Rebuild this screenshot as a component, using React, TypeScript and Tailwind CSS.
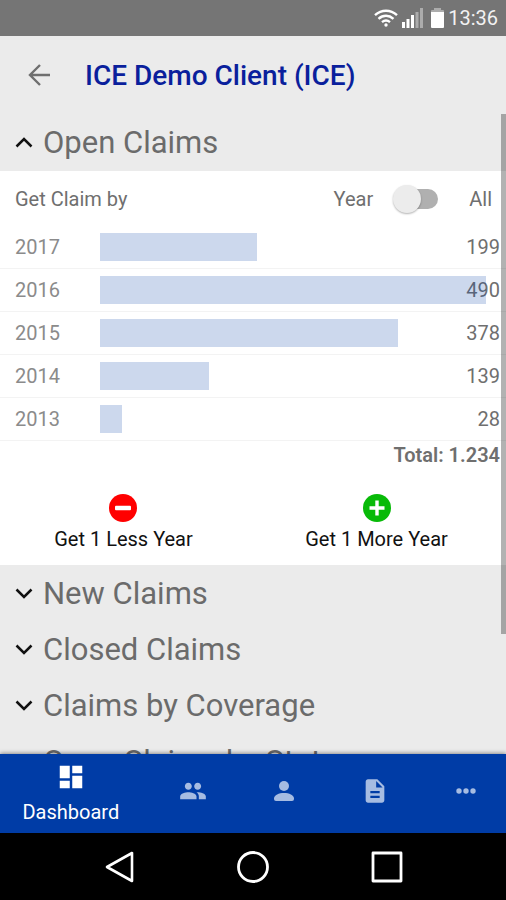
import { useState } from 'react';
import { MdDashboard, MdDescription, MdPeople } from 'react-icons/md';

const claims = [
  { year: 2017, count: 199 },
  { year: 2016, count: 490 },
  { year: 2015, count: 378 },
  { year: 2014, count: 139 },
  { year: 2013, count: 28 },
];

const collapsed = ['New Claims', 'Closed Claims', 'Claims by Coverage', 'Open Claims by Status'];

function StatusBar() {
  return (
    <div className="flex h-9 shrink-0 items-center justify-end bg-[#757575] pr-2 text-white">
      <svg width="24" height="18" viewBox="0 0 24 18" fill="none" stroke="currentColor" strokeWidth="2.4" aria-hidden="true">
        <path d="M1 6.2C7.500 .2 16.500 .2 23 6.200M4.500 9.800c4.500-4 10.500-4 15 0M8 13.200c2.400-2 5.600-2 8 0" />
        <circle cx="12" cy="16" r="1.700" fill="currentColor" stroke="none" />
      </svg>
      <svg className="ml-1" width="21" height="20" viewBox="0 0 21 20" fill="currentColor" aria-hidden="true">
        <path d="M0 14h3v6H0zM4.500 11h3v9h-3zM9 7h3v13H9z" />
        <path d="M13.500 4h3v16h-3zM18 0h3v20h-3z" opacity=".4" />
      </svg>
      <svg className="ml-2" width="13" height="20" viewBox="0 0 13 20" fill="currentColor" aria-hidden="true">
        <path d="M3 0h7v2h2q1 0 1 1v2H0V3q0-1 1-1h2z" opacity=".4" />
        <path d="M0 4h13v15q0 1-1 1H1q-1 0-1-1z" />
      </svg>
      <span className="ml-1 text-xl leading-6 text-[#f2f2f2]">13:36</span>
    </div>
  );
}

function Chevron({ open = false }: { open?: boolean }) {
  return (
    <svg className="mr-2.5 shrink-0" width="18" height="12" viewBox="0 0 18 12" fill="none" stroke="#111" strokeWidth="2.500" aria-hidden="true">
      <path d={open ? 'M1.500 9.500 9 2l7.500 7.500' : 'M1.500 1.500 9 9l7.500-7.500'} />
    </svg>
  );
}

function SectionHeader({ title, open = false }: { title: string; open?: boolean }) {
  return (
    <h2>
      <button type="button" aria-expanded={open} className="flex h-14 w-full items-center pl-[15px] text-left text-[31px] leading-9 text-[#6b6b6b]">
        <Chevron open={open} />
        {title}
      </button>
    </h2>
  );
}

function YearButton({ kind }: { kind: 'Less' | 'More' }) {
  const more = kind === 'More';
  return (
    <button type="button" className="flex flex-col items-center gap-[5px] text-xl leading-6 text-[#111]">
      <svg width="28" height="28" viewBox="0 0 28 28" aria-hidden="true">
        <circle cx="14" cy="14" r="14" fill={more ? '#08ba08' : '#ff0000'} />
        {more ? (
          <path d="M14 6.500v15M6.500 14h15" stroke="#fff" strokeWidth="3.400" />
        ) : (
          <rect x="6" y="11.700" width="16" height="4.600" rx="1" fill="#fff" />
        )}
      </svg>
      Get 1 {kind} Year
    </button>
  );
}

function ClaimsPanel() {
  const [all, setAll] = useState(false);
  const max = Math.max(...claims.map((c) => c.count));
  return (
    <div className="bg-white text-xl leading-6 text-[#6f6f6f]">
      <div className="flex h-[55px] items-center pr-3.5 pl-[15px]">
        <span className="grow">Get Claim by</span>
        <label className="flex items-center">
          Year
          <input
            type="checkbox"
            role="switch"
            aria-label="Show all years"
            checked={all}
            onChange={(e) => setAll(e.target.checked)}
            className="relative mx-5 h-7 w-[45px] appearance-none before:absolute before:top-1 before:right-0 before:h-5 before:w-9 before:rounded-full before:bg-[#b0b0b0] after:absolute after:top-0 after:left-0 after:size-7 after:rounded-full after:bg-[#ececec] after:shadow-[0_1px_2px_rgba(0,0,0,0.3)] checked:after:left-[17px]"
          />
          <span className="pl-[11px]">All</span>
        </label>
      </div>
      <ul>
        {claims.map((c) => (
          <li key={c.year} className="relative flex h-[43px] items-center border-b border-[#f3f3f3] pr-5 pl-[15px]">
            <span className="w-[85px] shrink-0 text-[#8b8b8b]">{c.year}</span>
            <span className="absolute right-1.5">{c.count}</span>
            <div className="relative h-7 grow">
              <div className="h-full bg-[#003ca6]/20" style={{ width: `${(c.count / max) * 100}%` }} />
            </div>
          </li>
        ))}
      </ul>
      <p className="pt-0.5 pr-1.5 text-right font-semibold">Total: 1.234</p>
      <div className="grid grid-cols-2 justify-items-center gap-1.5 pt-[27px] pr-1.5 pb-[14px]">
        <YearButton kind="Less" />
        <YearButton kind="More" />
      </div>
    </div>
  );
}

function TabBar() {
  return (
    <nav className="relative grid h-[79px] shrink-0 grid-cols-[14fr_9fr_9fr_9fr_9fr] bg-[#003ca6] text-[#a6bce2] shadow-[0_-1px_4px_rgba(0,0,0,0.4)]">
      <button type="button" className="flex flex-col items-center pt-2 text-xl leading-6 text-white">
        <MdDashboard size={30} />
        <span className="pt-2">Dashboard</span>
      </button>
      <button type="button" aria-label="Clients" className="flex items-center justify-center pb-1.5 pl-3">
        <MdPeople size={28} />
      </button>
      <button type="button" aria-label="Profile" className="flex items-center justify-center pb-1.5 pl-3">
        <svg width="20" height="20" viewBox="0 0 20 20" fill="currentColor" aria-hidden="true">
          <circle cx="10" cy="5" r="5" />
          <path d="M0 17.500C0 14 5 12 10 12s10 2 10 5.500V18q0 2-2 2H2q-2 0-2-2z" />
        </svg>
      </button>
      <button type="button" aria-label="Documents" className="flex items-center justify-center pb-1.5 pl-3">
        <MdDescription size={28} />
      </button>
      <button type="button" aria-label="More" className="flex items-center justify-center pb-1.5 pl-3">
        <svg width="20" height="6" viewBox="0 0 20 6" fill="currentColor" aria-hidden="true">
          <circle cx="3" cy="3" r="2.700" />
          <circle cx="10" cy="3" r="2.700" />
          <circle cx="17" cy="3" r="2.700" />
        </svg>
      </button>
    </nav>
  );
}

function SystemBar() {
  return (
    <div className="relative flex h-[67px] shrink-0 items-center justify-center gap-[102px] bg-black text-white">
      <button type="button" aria-label="Back">
        <svg width="32" height="32" viewBox="0 0 32 32" fill="none" stroke="currentColor" strokeWidth="2.600" strokeLinejoin="round">
          <path d="M29 2v28L4 16z" />
        </svg>
      </button>
      <button type="button" aria-label="Home">
        <svg width="32" height="32" viewBox="0 0 32 32" fill="none" stroke="currentColor" strokeWidth="2.800">
          <circle cx="16" cy="16" r="14.500" />
        </svg>
      </button>
      <button type="button" aria-label="Recent apps">
        <svg width="32" height="32" viewBox="0 0 32 32" fill="none" stroke="currentColor" strokeWidth="2.800" strokeLinejoin="round">
          <path d="M2 2h28v28H2z" />
        </svg>
      </button>
    </div>
  );
}

export default function App() {
  return (
    <div className="flex h-screen flex-col overflow-hidden bg-[#ebebeb] font-['Roboto',sans-serif]">
      <StatusBar />
      <header className="flex h-[78px] shrink-0 items-center gap-[34px] pl-7">
        <button type="button" aria-label="Go back" className="text-[#6f6f6f]">
          <svg width="23" height="22" viewBox="0 0 23 22" fill="none" stroke="currentColor" strokeWidth="2.400">
            <path d="M22 11H2M12 1 2 11l10 10" />
          </svg>
        </button>
        <h1 className="pt-0.5 text-[28px] leading-8 font-medium text-[#0a1f9c]">ICE Demo Client (ICE)</h1>
      </header>
      <main className="relative min-h-0 grow overflow-hidden pt-px">
        <SectionHeader title="Open Claims" open />
        <ClaimsPanel />
        <div className="pt-px">
          {collapsed.map((title) => (
            <SectionHeader key={title} title={title} />
          ))}
        </div>
        <div className="absolute top-0 right-0 h-[520px] w-[5px] bg-black/30" />
      </main>
      <TabBar />
      <SystemBar />
    </div>
  );
}
